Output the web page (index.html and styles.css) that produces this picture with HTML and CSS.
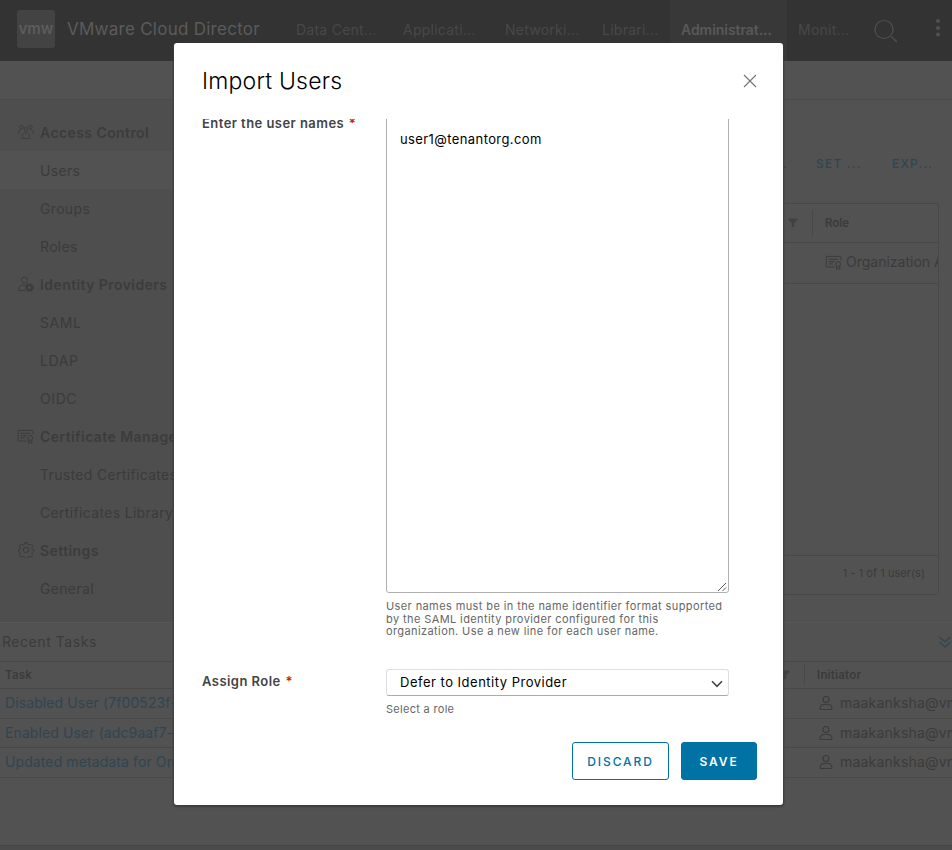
FILE: index.html
```html
<!DOCTYPE html>
<html lang="en">
<head>
<meta charset="utf-8">
<title>VMware Cloud Director</title>
<link rel="stylesheet" href="styles.css">
</head>
<body>
<svg class="defs" width="0" height="0" aria-hidden="true">
  <symbol id="i-cert" viewBox="0 0 18 16"><g fill="none" stroke="currentColor" stroke-width="1"><path d="M9.500 13H2a.8.8 0 0 1-.8-.8V3.200A.8.8 0 0 1 2 2.400h13.200a.8.8 0 0 1 .8.8v3.300"/><path d="M3.500 5.300h9.500M3.500 7.600h6M3.500 9.900h4.500"/><circle cx="13.200" cy="10" r="2.400"/><path d="M11.500 12v3.300l1.700-1.100 1.700 1.100V12"/></g></symbol>
  <symbol id="i-user" viewBox="0 0 14 16"><g fill="none" stroke="currentColor" stroke-width="1.100"><circle cx="7" cy="4.500" r="3"/><path d="M1.200 14.500v-2c0-1.900 2.400-3.300 5.800-3.300s5.800 1.400 5.800 3.300v2z"/></g></symbol>
  <symbol id="i-filter" viewBox="0 0 10 10"><path d="M.5 .5h9v1.200L6.200 5.200v3.200L3.800 9.600V5.200L.5 1.700z" fill="currentColor"/></symbol>
</svg>

<div class="app">
  <header class="header">
    <div class="logo">vmw</div>
    <div class="brand">VMware Cloud Director</div>
    <nav class="nav">
      <a>Data Cent...</a><a>Applicati...</a><a>Networki...</a><a>Librari...</a><a class="active">Administrat...</a><a>Monit...</a>
    </nav>
    <svg class="search" width="26" height="26" viewBox="0 0 26 26" fill="none" stroke="currentColor" stroke-width="1.200"><circle cx="11" cy="10.500" r="9"/><path d="M18.300 17.500l5.500 5.500"/></svg>
    <svg class="dots" width="6" height="20" viewBox="0 0 6 20" fill="currentColor"><circle cx="3" cy="3" r="2.100"/><circle cx="3" cy="10" r="2.100"/><circle cx="3" cy="16.500" r="2.100"/></svg>
  </header>
  <div class="subheader"></div>

  <div class="middle">
    <aside class="sidebar">
      <div class="group"><svg width="16" height="16" viewBox="0 0 16 16" fill="none" stroke="currentColor" stroke-width=".9"><circle cx="8" cy="5.300" r="1.900"/><circle cx="3.500" cy="3" r="1.700"/><circle cx="12.500" cy="3" r="1.700"/><path d="M4.500 14.500v-3.300c0-1.400 1.400-2.300 3.500-2.300s3.500.9 3.500 2.300v3.300zM.6 9.500V8c0-1.400 1-2.100 3.200-2.200M15.400 9.500V8c0-1.400-1-2.100-3.200-2.200"/></svg><span>Access Control</span></div>
      <div class="item selected">Users</div>
      <div class="item">Groups</div>
      <div class="item">Roles</div>
      <div class="group"><svg width="16" height="16" viewBox="0 0 16 16" fill="none" stroke="currentColor"><circle cx="6.500" cy="4" r="3"/><path d="M7 14.500H.8v-2.200c0-2 2.300-3.500 5.700-3.500h.8"/><circle cx="11.400" cy="11.500" r="2.600" stroke-width="2"/><circle cx="11.400" cy="11.500" r="3.800" stroke-width="1.300" stroke-dasharray="1.500 1.485"/></svg><span>Identity Providers</span></div>
      <div class="item caps">SAML</div>
      <div class="item caps">LDAP</div>
      <div class="item caps">OIDC</div>
      <div class="group"><svg width="18" height="16"><use href="#i-cert"/></svg><span>Certificate Management</span></div>
      <div class="item">Trusted Certificates</div>
      <div class="item">Certificates Library</div>
      <div class="group"><svg width="16" height="16" viewBox="0 0 16 16" fill="none" stroke="currentColor" stroke-linejoin="round"><circle cx="8" cy="8" r="2.700"/><path d="M6.700.7h2.600l.5 2 1.300.6 1.800-1.100 1.900 1.900-1.100 1.800.5 1.300 1.300.4v2.200l-1.300.6-.5 1.300 1 1.700-1.800 1.900-1.700-1-1.400.5-.5 1.800H6.700l-.5-1.800-1.300-.5-1.800 1-1.800-1.900 1-1.700-.5-1.300-1.200-.6V7.600l1.200-.4.5-1.300-1-1.800 1.800-1.900 1.800 1.100 1.300-.6z"/></svg><span>Settings</span></div>
      <div class="item">General</div>
    </aside>
    <main class="main">
      <div class="toolbar"><span class="more">...</span><span class="set">SET ...</span><span>EXP...</span></div>
      <div class="grid">
        <div class="grid-head"><svg width="10" height="10"><use href="#i-filter"/></svg><b>Role</b></div>
        <div class="grid-row"><svg width="18" height="16"><use href="#i-cert"/></svg><span>Organization A</span></div>
        <div class="grid-body"></div>
        <div class="grid-foot">1 - 1 of 1 user(s)</div>
      </div>
    </main>
  </div>

  <section class="tasks">
    <div class="tasks-title"><span>Recent Tasks</span><svg width="14" height="13" viewBox="0 0 14 13" fill="none" stroke="currentColor" stroke-width="1.200"><path d="M1.500 1l5.500 5 5.500-5M1.500 6l5.500 5 5.500-5"/></svg></div>
    <div class="task-head"><b>Task</b><div class="sep"><svg width="10" height="10"><use href="#i-filter"/></svg></div><b class="init">Initiator</b></div>
    <div class="task"><a>Disabled User (7f00523f-b</a><svg width="14" height="16"><use href="#i-user"/></svg><span>maakanksha@vm</span></div>
    <div class="task"><a>Enabled User (adc9aaf7-7</a><svg width="14" height="16"><use href="#i-user"/></svg><span>maakanksha@vm</span></div>
    <div class="task"><a>Updated metadata for Org</a><svg width="14" height="16"><use href="#i-user"/></svg><span>maakanksha@vm</span></div>
  </section>
  <div class="bottom"></div>
</div>

<div class="modal" role="dialog">
  <div class="modal-head"><h1>Import Users</h1><svg width="16" height="16" viewBox="0 0 16 16" fill="none" stroke="currentColor" stroke-width="1.200"><path d="M2 2l12 12M14 2L2 14"/></svg></div>
  <div class="modal-body">
    <div class="field names">
      <label>Enter the user names <i>*</i></label>
      <div class="control">
        <div class="textarea">user1@tenantorg.com<svg width="10" height="10" viewBox="0 0 10 10" stroke="#555" fill="none"><path d="M1 9L9 1M5.500 9L9 5.500"/></svg></div>
        <p class="help">User names must be in the name identifier format supported<br>by the SAML identity provider configured for this<br>organization. Use a new line for each user name.</p>
      </div>
    </div>
    <div class="field role">
      <label>Assign Role <i>*</i></label>
      <div class="control">
        <div class="select"><span>Defer to Identity Provider</span><svg width="12" height="8" viewBox="0 0 12 8" fill="none" stroke="#444" stroke-width="1.600"><path d="M1 1.200l5 5.200 5-5.200"/></svg></div>
        <p class="help short">Select a role</p>
      </div>
    </div>
  </div>
  <div class="modal-foot"><button class="discard">DISCARD</button><button class="save">SAVE</button></div>
</div>
</body>
</html>
```

FILE: styles.css
```css
* { box-sizing: border-box; }
body { margin: 0; width: 952px; height: 850px; overflow: hidden; position: relative; font: 14px/20px Inter, "Liberation Sans", sans-serif; background: #525252; color: #3b3b3b; }
svg { display: block; flex: none; }
.defs { position: absolute; }
.app { height: 850px; display: flex; flex-direction: column; white-space: nowrap; overflow: hidden; }

.header { height: 61px; flex: none; background: #333; display: flex; align-items: flex-start; color: #484848; }
.logo { width: 38px; height: 38px; margin: 10px 12px 0 17px; border-radius: 3px; background: #434343; color: #5c5c5c; font-weight: 600; font-size: 15px; line-height: 38px; text-align: center; }
.brand { width: 218px; line-height: 58px; font-size: 17px; letter-spacing: .26px; color: #5b5b5b; }
.nav { display: grid; grid-template-columns: 107px 102px 97px 79px 117px 70px; }
.nav a { height: 61px; line-height: 59px; padding-left: 11px; letter-spacing: .25px; }
.nav .active { background: #383838; color: #585858; font-weight: 600; letter-spacing: -.05px; }
.search { margin: 19px 0 0 16px; color: #505050; }
.dots { margin: 18px 0 0 36px; color: #505050; }
.subheader { height: 39px; flex: none; border-bottom: 1px solid #4a4a4a; }

.middle { height: 522px; flex: none; display: flex; }
.sidebar { width: 200px; background: #4e4e4e; padding-top: 13px; }
.group, .item { height: 38px; line-height: 39px; }
.group { display: flex; align-items: center; padding-left: 17px; font-weight: 600; color: #3c3c3c; letter-spacing: .42px; }
.group span { padding-top: 1px; }
.group svg { width: 18px; margin-right: 5px; }
.item { padding-left: 40px; letter-spacing: .33px; }
.caps { letter-spacing: .6px; }
.selected { background: #525252; }
.main { flex: 1; min-width: 0; }
.toolbar { height: 103px; padding-top: 54px; display: flex; color: #304552; font-size: 12px; letter-spacing: 1.200px; font-weight: 500; }
.more { width: 43px; margin-left: 573px; }
.set { width: 76px; }
.grid { width: 739px; height: 392px; border: 1px solid #484848; border-radius: 3px; display: flex; flex-direction: column; overflow: hidden; }
.grid-head { height: 39px; border-bottom: 1px solid #484848; display: flex; align-items: center; padding-left: 587px; font-size: 11.500px; }
.grid-head svg { color: #414141; }
.grid-head b { border-left: 1px solid #484848; line-height: 26px; padding-left: 12px; margin-left: 14px; font-weight: 600; }
.grid-row { height: 41px; border-bottom: 1px solid #484848; display: flex; align-items: center; padding: 0 0 3px 624px; }
.grid-row span { margin-left: 3px; }
.grid-body { flex: 1; }
.grid-foot { height: 39px; border-top: 1px solid #484848; line-height: 35px; font-size: 11px; text-align: right; padding-right: 13px; letter-spacing: .05px; }

.tasks { flex: none; border-top: 1px solid #575757; height: 223px; }
.tasks-title { height: 38px; display: flex; align-items: center; justify-content: space-between; padding-left: 2px; }
.tasks-title span { letter-spacing: .55px; }
.tasks-title svg { color: #304552; }
.task-head { height: 28px; border-top: 1px solid #484848; border-bottom: 1px solid #484848; display: flex; align-items: center; font-size: 11.500px; padding-left: 5px; }
.task-head b { font-weight: 600; width: 775px; letter-spacing: .2px; }
.task-head .sep { height: 20px; width: 25px; border-right: 1px solid #484848; display: flex; align-items: center; color: #414141; }
.task-head .init { width: auto; margin-left: 12px; }
.task { height: 29.600px; border-bottom: 1px solid #484848; display: flex; align-items: center; padding-left: 5px; }
.task a { width: 814px; flex: none; color: #304552; letter-spacing: .1px; }
.task span { margin-left: 7px; letter-spacing: .2px; }
.bottom { flex: 1; background: #4b4b4b; border-top: 1px solid #454545; }

.modal { position: absolute; left: 174px; top: 43px; width: 609px; height: 762px; background: #fff; border-radius: 3px; box-shadow: 0 1px 2px 1px #3c3c3c; padding: 0 26px 0 28px; display: flex; flex-direction: column; color: #000; }
.modal-head { height: 76px; display: flex; justify-content: space-between; color: #777; }
.modal-head h1 { margin: 0; font-weight: 300; font-size: 23px; line-height: 76px; color: #000; letter-spacing: .2px; }
.modal-head svg { margin: 30px -1px 0 0; }
.modal-body { height: 609px; overflow: hidden; }
.field { display: flex; }
label { width: 184px; font-size: 13px; font-weight: 600; color: #444; line-height: 20px; letter-spacing: .45px; }
label i { font-style: normal; color: #c92100; margin-left: 1px; }
.control { width: 343px; }
.names { margin-top: -6px; height: 556px; }
.textarea { height: 480px; border: 1px solid #b0b0b0; border-radius: 3px; padding: 15px 13px; font-size: 13px; letter-spacing: .4px; display: flex; justify-content: space-between; }
.textarea svg { align-self: flex-end; margin: 0 -12px -15px 0; }
.help { margin: 7px 0 0; font-size: 11px; line-height: 12.700px; color: #666; letter-spacing: .4px; white-space: nowrap; }
.short { letter-spacing: .3px; }
.role label { line-height: 24px; }
.select { height: 27px; border: 1px solid #ddd; border-bottom-color: #aaa; border-radius: 3px; padding: 0 5px 0 13px; display: flex; align-items: center; justify-content: space-between; font-size: 13px; letter-spacing: .5px; }
.select span { padding-bottom: 2px; }
.select svg { margin-top: 2px; }
.modal-foot { margin-top: 14px; display: flex; justify-content: flex-end; gap: 12px; }
button { height: 38px; border: 1px solid #0072a3; border-radius: 3px; font: 500 12px Inter, sans-serif; letter-spacing: 1.900px; padding: 0; color: #0072a3; background: #fff; }
.discard { width: 97px; }
.save { width: 76px; background: #0072a3; color: #fff; font-weight: 600; }
```
